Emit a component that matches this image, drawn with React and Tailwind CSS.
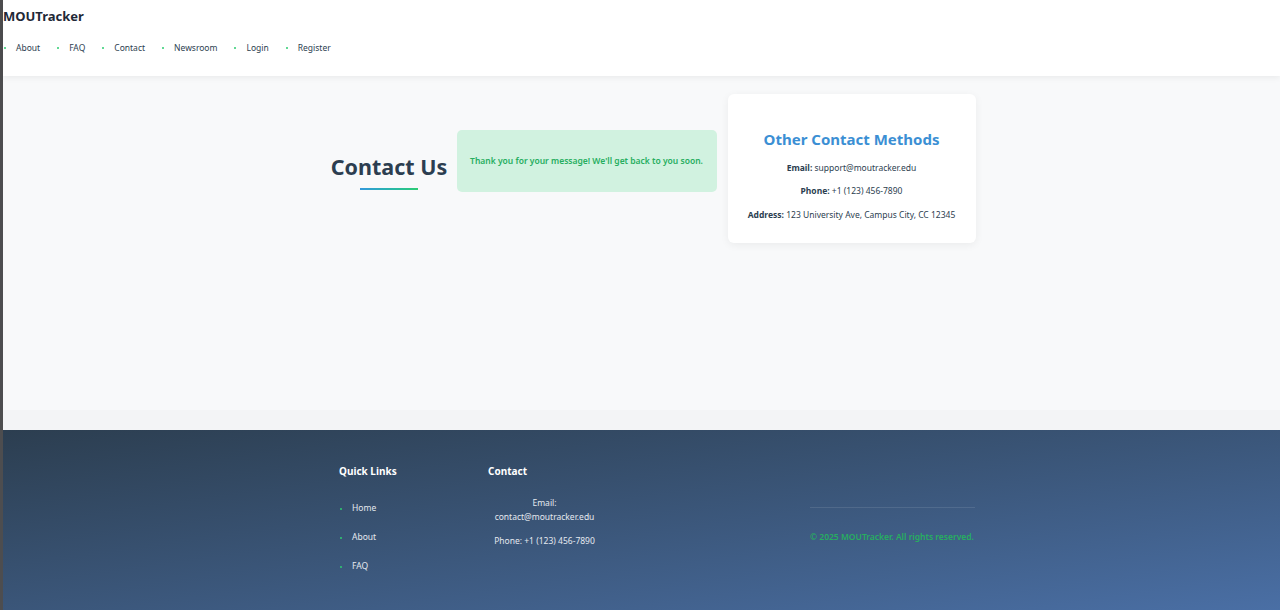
import React from "react";

const nav = ["About", "FAQ", "Contact", "Newsroom", "Login", "Register"];
const quick = ["Home", "About", "FAQ"];

function Dot({ className = "" }) {
  return <span className={"inline-block w-[2px] h-[2px] rounded-full bg-[#2ecc71] " + className} />;
}

export default function App() {
  return (
    <div className="flex min-h-[610px] bg-[#f3f4f6] font-['Noto_Sans','Liberation_Sans',sans-serif]">
      <div className="w-[3px] shrink-0 bg-[#4d4d4f]" />
      <div className="flex-1 flex flex-col">
        <header className="h-[76px] bg-white shadow-[0_2px_6px_rgba(0,0,0,0.06)] relative z-10">
          <div className="pt-[6px] text-[13px] font-bold text-[#1f2937] leading-[20px]">MOUTracker</div>
          <ul className="flex items-center mt-[16px] text-[8.5px] text-[#2c3e50]">
            {nav.map((n) => (
              <li key={n} className="flex items-center mr-[16px]">
                <Dot className="ml-[1px] mr-[10px]" />
                <span>{n}</span>
              </li>
            ))}
          </ul>
        </header>

        <main className="h-[334px] bg-[#f8f9fa]">
          <div className="flex items-center justify-center pl-[24px] pt-[18px] gap-[10px]">
            <div className="flex flex-col items-center w-[115px] pt-[5px]">
              <h1 className="text-[21.5px] font-bold text-[#2c3e50] leading-[30px] whitespace-nowrap">Contact Us</h1>
              <div className="w-[58px] h-[2px] mt-[6px] bg-gradient-to-r from-[#3498db] to-[#2ecc71]" />
            </div>
            <div className="w-[260px] h-[62px] rounded-[5px] bg-[#d1f2e0] flex items-center justify-center text-[8.5px] font-semibold text-[#27ae60] -mt-[15px]">
              Thank you for your message! We'll get back to you soon.
            </div>
            <div className="w-[248px] h-[149px] ml-[1px] rounded-[6px] bg-white shadow-[0_2px_8px_rgba(0,0,0,0.06)] flex flex-col items-center pt-[34px] text-[8.5px] text-[#2c3e50]">
              <h2 className="text-[15px] font-bold text-[#3b8fd4] leading-[22px]">Other Contact Methods</h2>
              <p className="mt-[12px] leading-[12px]"><b>Email:</b> support@moutracker.edu</p>
              <p className="mt-[11px] leading-[12px]"><b>Phone:</b> +1 (123) 456-7890</p>
              <p className="mt-[12px] leading-[12px] whitespace-nowrap"><b>Address:</b> 123 University Ave, Campus City, CC 12345</p>
            </div>
          </div>
        </main>

        <div className="h-[20px] bg-[#f3f4f6]" />

        <footer className="h-[180px] bg-gradient-to-br from-[#2c3e50] to-[#4a6fa5] text-white">
          <div className="flex justify-center pl-[31px] pt-[34px]">
            <div className="w-[149px]">
              <h3 className="text-[10px] font-bold leading-[14px]">Quick Links</h3>
              <ul className="mt-[16px] text-[8.5px] text-[#e5e9ef]">
                {quick.map((q) => (
                  <li key={q} className="flex items-center h-[29px]">
                    <Dot className="ml-[1px] mr-[10px]" />
                    <span>{q}</span>
                  </li>
                ))}
              </ul>
            </div>
            <div className="w-[113px]">
              <h3 className="text-[10px] font-bold leading-[14px]">Contact</h3>
              <div className="mt-[18px] text-[8.5px] text-[#e5e9ef] text-center leading-[14px]">
                <p>Email:<br />contact@moutracker.edu</p>
                <p className="mt-[10px]">Phone: +1 (123) 456-7890</p>
              </div>
            </div>
            <div className="w-[209px]" />
            <div className="w-[165px] pt-[43px]">
              <div className="h-px bg-white/10" />
              <p className="mt-[22px] text-[8.5px] font-semibold text-[#27ae60] leading-[14px] whitespace-nowrap">© 2025 MOUTracker. All rights reserved.</p>
            </div>
          </div>
        </footer>
      </div>
    </div>
  );
}
